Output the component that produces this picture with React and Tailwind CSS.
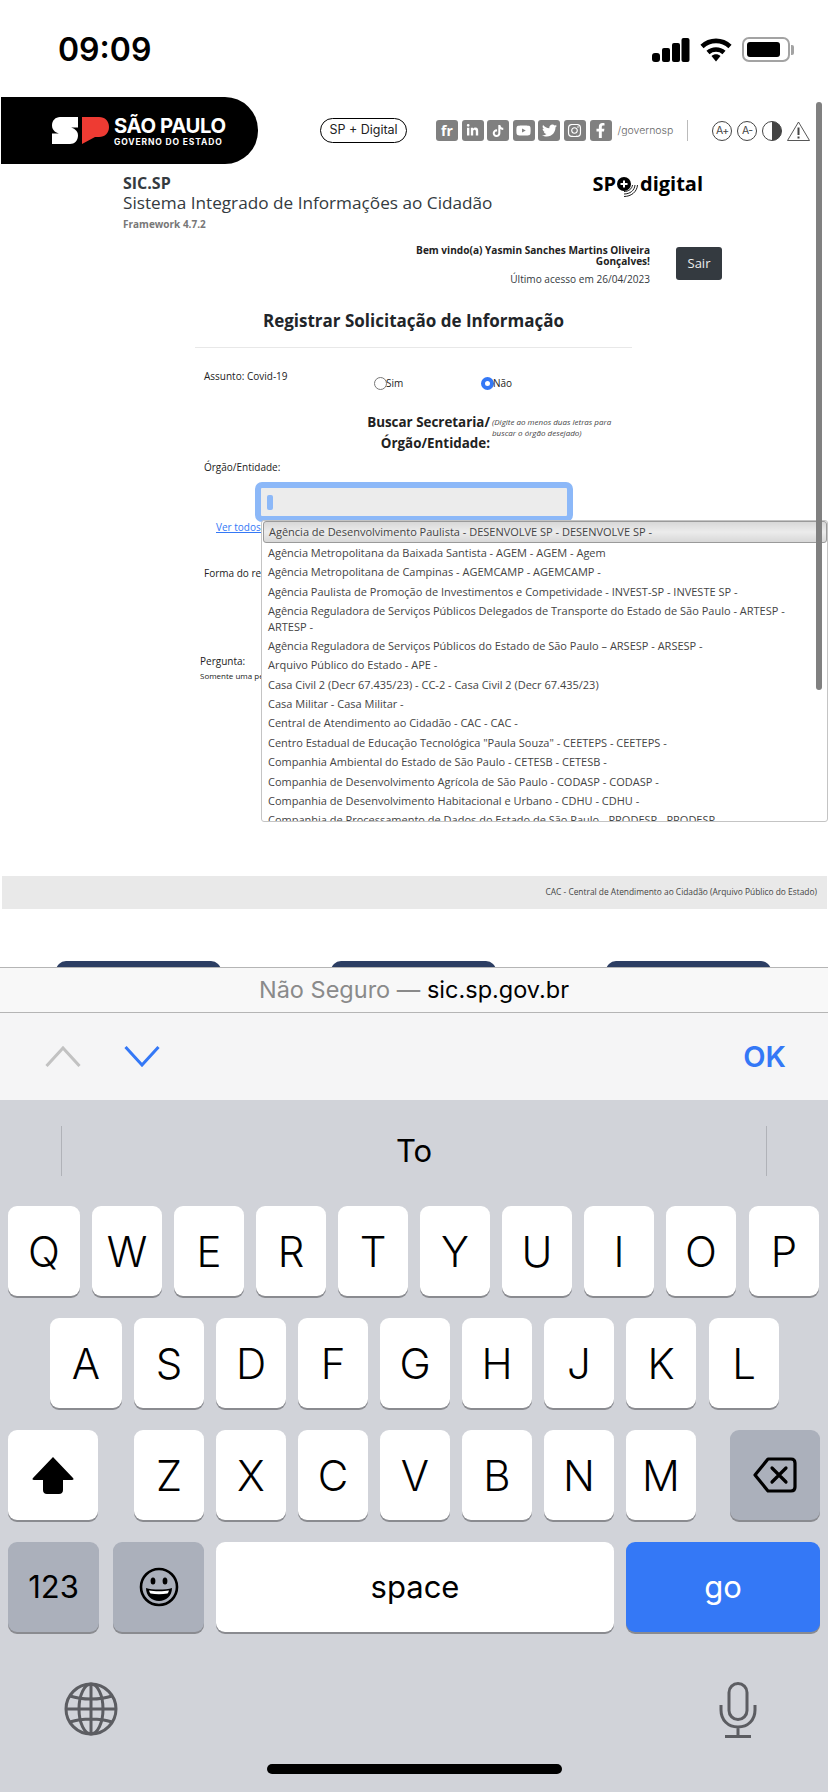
import { FaLinkedinIn, FaTiktok, FaYoutube, FaTwitter, FaInstagram, FaFacebookF } from "react-icons/fa";

const agencies = [
    "Agência Metropolitana da Baixada Santista - AGEM - AGEM - Agem",
    "Agência Metropolitana de Campinas - AGEMCAMP - AGEMCAMP -",
    "Agência Paulista de Promoção de Investimentos e Competividade - INVEST-SP - INVESTE SP -",
    "Agência Reguladora de Serviços Públicos Delegados de Transporte do Estado de São Paulo - ARTESP - ARTESP -",
    "Agência Reguladora de Serviços Públicos do Estado de São Paulo – ARSESP - ARSESP -",
    "Arquivo Público do Estado - APE -",
    "Casa Civil 2 (Decr 67.435/23) - CC-2 - Casa Civil 2 (Decr 67.435/23)",
    "Casa Militar - Casa Militar -",
    "Central de Atendimento ao Cidadão - CAC - CAC -",
    'Centro Estadual de Educação Tecnológica "Paula Souza" - CEETEPS - CEETEPS -',
    "Companhia Ambiental do Estado de São Paulo - CETESB - CETESB -",
    "Companhia de Desenvolvimento Agrícola de São Paulo - CODASP - CODASP -",
    "Companhia de Desenvolvimento Habitacional e Urbano - CDHU - CDHU -",
    "Companhia de Processamento de Dados do Estado de São Paulo - PRODESP - PRODESP -",
];

const StatusBar = () => (
    <div className="relative flex h-[97px] shrink-0 items-start justify-between bg-white pl-[58px] pr-[34px] pt-[30px]">
        <span className="font-['Inter',sans-serif] text-[32px] font-semibold leading-[40px] text-black">09:09</span>
        <div className="flex items-center pt-[7px]">
            <svg width="38" height="24" viewBox="0 0 38 24" fill="#000">
                <rect x="0" y="15" width="8" height="9" rx="3" />
                <rect x="10" y="10" width="8" height="14" rx="2" />
                <rect x="20" y="5" width="8" height="19" rx="2" />
                <rect x="29.5" y="0" width="8" height="24" rx="2" />
            </svg>
            <svg className="ml-[10px]" width="32" height="24" viewBox="0 0 32 24" fill="none" stroke="#000" strokeWidth="4.6">
                <path d="M2 8.5C10 1 22 1 30 8.5" />
                <path d="M8 14.5C12.5 10.5 19.5 10.5 24 14.5" />
                <path d="M11.5 18L16 23.5L20.5 18C18 15.8 14 15.8 11.5 18Z" fill="#000" stroke="none" />
            </svg>
            <div className="ml-[10px] flex h-[25px] w-[48px] items-center rounded-[7px] border-[2px] border-[#a3a3a3] pl-[3px]">
                <div className="h-[15px] w-[33px] rounded-[3px] bg-black" />
            </div>
            <div className="ml-[1px] h-[10px] w-[3px] rounded-r-[2px] bg-[#a3a3a3]" />
        </div>
    </div>
);

const SocialBox = ({ children }) => (
    <div className="flex h-[21px] w-[22px] items-center justify-center rounded-[3px] bg-[#808080] text-[13px] font-bold text-white">
        {children}
    </div>
);

const Header = () => (
    <div className="flex h-[67px] shrink-0 items-center">
        <div className="ml-[1px] flex h-[67px] w-[257px] items-center rounded-r-[33px] bg-black pl-[51px]">
            <svg width="57" height="27" viewBox="0 0 57 27">
                <path d="M8 0H26V10.5H19C21 11 26 13 26 18.5C26 23.500 22.500 27 18 27H0V16.500H7C5 16 0 14 0 8.500C0 3.500 3.500 0 8 0Z" fill="#fff" />
                <path d="M30 0H47C53 0 57 4 57 10C57 16 53 20 47 20H43L30 27Z" fill="#ee3b33" />
            </svg>
            <div className="ml-[5px] flex flex-col font-['Inter',sans-serif] font-bold text-white">
                <span className="text-[20.3px] leading-[22px] tracking-[-0.4px]">SÃO PAULO</span>
                <span className="text-[8.5px] leading-[10px] tracking-[0.85px]">GOVERNO DO ESTADO</span>
            </div>
        </div>
        <div className="ml-[62px] flex h-[25px] w-[87px] items-center justify-center rounded-full border border-black font-['Inter',sans-serif] text-[12.5px] text-[#222]">
            SP + Digital
        </div>
        <div className="ml-[29px] flex gap-[3.6px]">
            <SocialBox><span className="font-['Open_Sans',sans-serif] text-[14px]">fr</span></SocialBox>
            <SocialBox><FaLinkedinIn /></SocialBox>
            <SocialBox><FaTiktok size={12} /></SocialBox>
            <SocialBox><FaYoutube size={15} /></SocialBox>
            <SocialBox><FaTwitter size={15} /></SocialBox>
            <SocialBox><FaInstagram size={15} /></SocialBox>
            <SocialBox><FaFacebookF size={15} /></SocialBox>
        </div>
        <span className="ml-[6px] font-['Inter',sans-serif] text-[10.5px] font-light text-[#666]">/governosp</span>
        <div className="ml-[14px] h-[21px] w-[1px] bg-[#bbb]" />
        <div className="ml-[24px] flex items-center gap-[5px]">
            <div className="flex h-[20px] w-[20px] items-center justify-center rounded-full border border-[#444] font-['Inter',sans-serif] text-[10.5px] tracking-[-0.5px] text-[#444]">A+</div>
            <div className="flex h-[20px] w-[20px] items-center justify-center rounded-full border border-[#444] font-['Inter',sans-serif] text-[10.5px] tracking-[-0.5px] text-[#444]">A-</div>
            <svg width="20" height="20" viewBox="0 0 20 20">
                <circle cx="10" cy="10" r="9.5" fill="#fff" stroke="#444" />
                <path d="M10 0.5A9.5 9.5 0 0 1 10 19.5Z" fill="#444" />
            </svg>
            <svg width="23" height="20" viewBox="0 0 23 20" fill="none" stroke="#444" strokeWidth="0.9">
                <path d="M11.5 1L22.5 19.5H0.5Z" strokeLinejoin="round" />
                <path d="M11.5 6.5V14M11.5 15.5V17.5" strokeWidth="2" />
            </svg>
        </div>
    </div>
);

const SystemTitle = () => (
    <div className="flex h-[81px] shrink-0 items-start justify-between pl-[123px] pr-[125px] pt-[9px]">
        <div className="flex flex-col">
            <span className="text-[16px] font-bold leading-[20px] text-[#343a40]">SIC.SP</span>
            <span className="text-[17.2px] leading-[19px] text-[#343a40]">Sistema Integrado de Informações ao Cidadão</span>
            <span className="mt-[6px] text-[10px] font-bold leading-[13px] text-[#777]">Framework 4.7.2</span>
        </div>
        <div className="-mt-[3px] flex items-center text-[20px] font-bold leading-[24px] text-black">
            <span>SP</span>
            <svg width="24" height="28" viewBox="0 0 24 28" fill="none">
                <circle cx="8" cy="14" r="7" fill="#000" />
                <path d="M8 10.500V17.500M4.500 14H11.500" stroke="#fff" strokeWidth="2" />
                <path d="M16.500 15C16 19 12.500 21.500 8 21.500M19 15C18.500 20.500 14 24 8 24M21.500 15C21 22 15 26.500 8 26.500" stroke="#000" strokeWidth="0.9" />
            </svg>
            <span>digital</span>
        </div>
    </div>
);

const Welcome = () => (
    <div className="flex h-[64px] shrink-0 items-start justify-end pr-[106px]">
        <div className="w-[270px] text-right text-[10.1px] text-[#343a40]">
            <div className="font-bold leading-[11px] text-[#222]">Bem vindo(a) Yasmin Sanches Martins Oliveira Gonçalves!</div>
            <div className="mt-[6px] leading-[13px]">Último acesso em 26/04/2023</div>
        </div>
        <div className="ml-[26px] mt-[2px] flex h-[33px] w-[46px] items-center justify-center rounded-[3px] bg-[#343a40] text-[13px] text-[#eee]">
            Sair
        </div>
    </div>
);

const FormArea = () => (
    <div className="flex shrink-0 flex-col text-[10px] text-[#222]">
        <div className="ml-[195px] w-[437px] border-b border-[#e8e8e8] pb-[14px] text-center text-[17px] font-bold leading-[24px] text-[#212529]">
            Registrar Solicitação de Informação
        </div>
        <div className="mt-[21px] flex h-[30px] items-start pl-[204px]">
            <span className="w-[170px] leading-[14px]">Assunto: Covid-19</span>
            <div className="mt-[8px] flex w-[107px] items-start">
                <div className="h-[13px] w-[13px] rounded-full border border-[#777] bg-white" />
                <span className="-ml-[1px] leading-[12px]">Sim</span>
            </div>
            <div className="mt-[8px] flex items-start">
                <div className="h-[13px] w-[13px] rounded-full border-[4px] border-[#3478f6] bg-white" />
                <span className="-ml-[1px] leading-[12px]">Não</span>
            </div>
        </div>
        <div className="mt-[13px] flex items-start">
            <div className="w-[490px] pl-[340px] text-right text-[13.4px] font-bold leading-[21px] text-[#222]">
                Buscar Secretaria/ Órgão/Entidade:
            </div>
            <div className="ml-[2px] mt-[4px] w-[130px] text-[8px] italic leading-[11px] text-[#444]">
                (Digite ao menos duas letras para buscar o órgão desejado)
            </div>
        </div>
        <div className="mt-[6px] pl-[204px] leading-[14px]">Órgão/Entidade:</div>
        <div className="ml-[255px] mt-[8px] h-[40px] w-[318px] rounded-[7px] border-[6px] border-[#8cb8f8] bg-[#ececec] pl-[6px] pt-[7px]">
            <div className="h-[15px] w-[6px] rounded-[2px] bg-[#8cb8f8]" />
        </div>
        <div className="ml-[216px] mt-[-2px] leading-[14px] text-[#3478f6] underline">Ver todos os órgãos</div>
        <div className="mt-[32px] pl-[204px] leading-[14px]">Forma do recebimento da resposta:</div>
        <div className="mt-[74px] pl-[200px] leading-[14px]">Pergunta:</div>
        <div className="mt-[2px] pl-[200px] text-[8px] leading-[12px]">Somente uma pergunta por solicitação</div>
    </div>
);

const AgencyList = () => (
    <div className="absolute left-[261px] top-[423px] h-[302px] w-[567px] overflow-hidden rounded-[3px] border border-[#c4c4c4] bg-white text-[11px] leading-[15.5px] text-[#444]">
        <div className="ml-[1px] flex h-[22px] items-center rounded-[3px] border border-[#9a9a9a] bg-gradient-to-b from-[#d8d8d8] via-[#ececec] to-[#d8d8d8] pl-[5px]">
            Agência de Desenvolvimento Paulista - DESENVOLVE SP - DESENVOLVE SP -
        </div>
        {agencies.map((a) => (
            <div key={a} className="px-[6px] py-[1.95px]">{a}</div>
        ))}
    </div>
);

const WebPage = () => (
    <div className="relative flex h-[870px] shrink-0 flex-col overflow-hidden bg-white font-['Open_Sans',sans-serif]">
        <Header />
        <SystemTitle />
        <Welcome />
        <FormArea />
        <AgencyList />
        <div className="ml-[2px] mt-[194px] flex h-[33px] w-[825px] shrink-0 items-center justify-end bg-[#e9e9e9] pr-[10px] text-[8.4px] text-[#444]">
            CAC - Central de Atendimento ao Cidadão (Arquivo Público do Estado)
        </div>
        <div className="ml-[56px] mt-[52px] flex shrink-0 gap-[110px]">
            <div className="h-[10px] w-[165px] rounded-t-[10px] bg-[#2c3e63]" />
            <div className="h-[10px] w-[165px] rounded-t-[10px] bg-[#2c3e63]" />
            <div className="h-[10px] w-[165px] rounded-t-[10px] bg-[#2c3e63]" />
        </div>
        {/* scrollbar da pagina */}
        <div className="absolute right-[6px] top-[5px] h-[588px] w-[6px] rounded-full bg-[#808080]" />
    </div>
);

const BrowserBars = () => (
    <>
        <div className="flex h-[46px] shrink-0 items-center justify-center border-y border-[#b5b5b5] bg-[#f8f8f8] font-['Inter',sans-serif] text-[23.5px]">
            <span className="text-[#8a8a8a]">Não Seguro —&nbsp;</span>
            <span className="text-black">sic.sp.gov.br</span>
        </div>
        <div className="flex h-[87px] shrink-0 items-center justify-between bg-[#f5f5f6] pl-[45px] pr-[42px]">
            <div className="flex items-center gap-[43px]">
                <svg width="36" height="21" viewBox="0 0 36 21" fill="none" stroke="#c2c2c2" strokeWidth="3">
                    <path d="M1.5 20L18 2L34.5 20" />
                </svg>
                <svg width="36" height="21" viewBox="0 0 36 21" fill="none" stroke="#3478f6" strokeWidth="3">
                    <path d="M1.5 1L18 19L34.5 1" />
                </svg>
            </div>
            <span className="font-['Inter',sans-serif] text-[29px] font-semibold text-[#3478f6]">OK</span>
        </div>
    </>
);

const Key = ({ children, className = "w-[70px] bg-white" }) => (
    <div className={`flex h-[90px] items-center justify-center rounded-[9px] shadow-[0_2px_0_#8a8b90] ${className}`}>
        {children}
    </div>
);

const LetterRow = ({ letters, className }) => {
    const keys = letters.split("");
    return (
        <div className={`flex gap-[12px] ${className}`}>
            {keys.map((l, i) => (
                <Key
                    key={l}
                    className={
                        i === 0
                            ? "w-[72px] bg-white"
                            : i === keys.length - 1
                              ? "ml-[1px] w-[70px] bg-white"
                              : "w-[70px] bg-white"
                    }
                >
                    {l}
                </Key>
            ))}
        </div>
    );
};

const Keyboard = () => (
    <div className="flex flex-1 flex-col bg-[#d1d3d9] font-['Inter',sans-serif] text-black">
        <div className="flex h-[106px] shrink-0 items-start justify-between px-[61px] pt-[26px]">
            <div className="h-[50px] w-[1px] bg-[#b0b2b8]" />
            <span className="mt-[3px] text-[31px] leading-[44px]">To</span>
            <div className="h-[50px] w-[1px] bg-[#b0b2b8]" />
        </div>
        <div className="flex flex-col gap-[22px] text-[42px] font-light">
            <LetterRow letters="QWERTYUIOP" className="pl-[8px]" />
            <LetterRow letters="ASDFGHJKL" className="pl-[50px]" />
            <div className="flex gap-[12px] pl-[8px]">
                <Key className="mr-[24px] w-[90px] bg-white">
                    <svg width="42" height="37" viewBox="0 0 42 37" fill="#000">
                        <path d="M21 0L41 21C42 22 41.500 23 40 23H31V33C31 35.500 29.500 37 27 37H15C12.500 37 11 35.500 11 33V23H2C0.500 23 0 22 1 21Z" />
                    </svg>
                </Key>
                {"ZXCVBNM".split("").map((l) => (
                    <Key key={l}>{l}</Key>
                ))}
                <Key className="ml-[22px] w-[90px] bg-[#abb0bb]">
                    <svg width="44" height="36" viewBox="0 0 44 36" fill="none" stroke="#000" strokeWidth="3.2" strokeLinejoin="round">
                        <path d="M15 2H38C40.500 2 42 3.500 42 6V30C42 32.500 40.500 34 38 34H15L2 18Z" />
                        <path d="M19 11L33 25M33 11L19 25" strokeLinecap="round" />
                    </svg>
                </Key>
            </div>
            <div className="flex gap-[12px] pl-[8px] text-[31px] font-normal">
                <Key className="mr-[2px] w-[91px] bg-[#abb0bb]">123</Key>
                <Key className="w-[91px] bg-[#abb0bb]">
                    <svg width="40" height="40" viewBox="0 0 40 40">
                        <circle cx="20" cy="20" r="18" fill="none" stroke="#000" strokeWidth="2.6" />
                        <ellipse cx="14" cy="14" rx="2.4" ry="3.6" fill="#000" />
                        <ellipse cx="26" cy="14" rx="2.4" ry="3.6" fill="#000" />
                        <path d="M7 21C13 23 27 23 33 21C33 29 27 34 20 34C13 34 7 29 7 21Z" fill="#000" />
                        <path d="M10 23.500C15 24.500 25 24.500 30 23.500C29.500 25 29 26 28.500 26.500C23 27.500 17 27.500 11.500 26.500C11 26 10.500 25 10 23.500Z" fill="#fff" />
                    </svg>
                </Key>
                <Key className="w-[398px] bg-white">space</Key>
                <Key className="w-[194px] bg-[#3478f6] text-white">go</Key>
            </div>
        </div>
        <div className="flex items-start justify-between pl-[64px] pr-[71px] pt-[50px]">
            <svg width="54" height="54" viewBox="0 0 54 54" fill="none" stroke="#5c5d62" strokeWidth="3">
                <circle cx="27" cy="27" r="25" />
                <ellipse cx="27" cy="27" rx="12" ry="25" />
                <path d="M27 2V52M2 27H52M6 14C18 18 36 18 48 14M6 40C18 36 36 36 48 40" />
            </svg>
            <svg width="38" height="56" viewBox="0 0 38 56" fill="none" stroke="#5c5d62" strokeWidth="3">
                <rect x="10" y="1.500" width="18" height="36" rx="9" />
                <path d="M2 23V28C2 38 9 45 19 45C29 45 36 38 36 28V23M19 45V54" />
                <path d="M6 54.500H32" strokeWidth="3" />
            </svg>
        </div>
        <div className="mx-auto mt-[26px] h-[10px] w-[295px] rounded-full bg-black" />
    </div>
);

export default function App() {
    return (
        <div className="flex h-[1792px] w-[828px] flex-col overflow-hidden bg-white">
            <StatusBar />
            <WebPage />
            <BrowserBars />
            <Keyboard />
        </div>
    );
}
